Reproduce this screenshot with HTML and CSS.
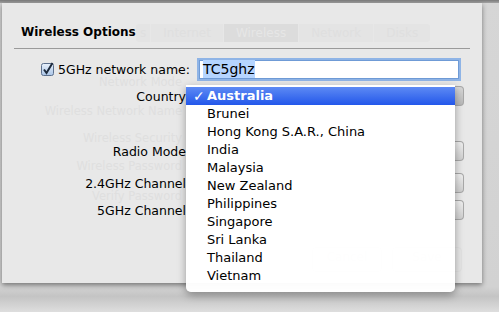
FILE: index.html
```html
<!DOCTYPE html>
<html lang="en">
<head>
  <meta charset="UTF-8">
  <title>Wireless Options</title>
  <link rel="stylesheet" href="styles.css">
</head>
<body>
  <div class="titlebar"></div>
  <div class="desk">
    <div class="sheet">
      <!-- faded window underneath the sheet -->
      <div class="ghost">
        <div class="ghost-tabs">
          <span class="gtab gtab-cut">s</span>
          <span class="gtab">Internet</span>
          <span class="gtab gtab-on">Wireless</span>
          <span class="gtab">Network</span>
          <span class="gtab">Disks</span>
        </div>
        <div class="glabel g1">Network Mode</div>
        <div class="glabel g2">Wireless Network Name</div>
        <div class="glabel g3">Wireless Security</div>
        <div class="glabel g4">Wireless Password</div>
        <div class="glabel g5">Verify Password</div>
        <div class="gbtn gb1">Cancel</div>
        <div class="gbtn gb2">Save</div>
      </div>

      <h2 class="title">Wireless Options</h2>
      <div class="rule"></div>

      <div class="form">
        <div class="row row-name">
          <label class="check-label">
            <svg class="check" width="13" height="14" viewBox="0 0 13 14">
              <defs>
                <linearGradient id="cb" x1="0" y1="0" x2="0" y2="1">
                  <stop offset="0" stop-color="#e9f1fb"/>
                  <stop offset="1" stop-color="#a9c4e6"/>
                </linearGradient>
              </defs>
              <rect x="0.5" y="1.5" width="12" height="12" rx="2" fill="url(#cb)" stroke="#5b6f8c"/>
              <path d="M3 7.5 L5.5 11 L11.5 1" fill="none" stroke="#1d2a3c" stroke-width="2"/>
            </svg>
            5GHz network name:
          </label>
          <div class="field"><span class="sel">TC5ghz</span></div>
        </div>
        <div class="row row-country"><span class="label">Country</span><span class="popup"></span></div>
        <div class="row row-radio"><span class="label">Radio Mode</span><span class="popup"></span></div>
        <div class="row row-24"><span class="label">2.4GHz Channel</span><span class="popup"></span></div>
        <div class="row row-5"><span class="label">5GHz Channel</span><span class="popup"></span></div>
      </div>

      <ul class="menu">
        <li class="item on"><span class="tick">✓</span>Australia</li>
        <li class="item">Brunei</li>
        <li class="item">Hong Kong S.A.R., China</li>
        <li class="item">India</li>
        <li class="item">Malaysia</li>
        <li class="item">New Zealand</li>
        <li class="item">Philippines</li>
        <li class="item">Singapore</li>
        <li class="item">Sri Lanka</li>
        <li class="item">Thailand</li>
        <li class="item">Vietnam</li>
      </ul>
    </div>
  </div>
</body>
</html>
```

FILE: styles.css
```css
body {
  margin: 0;
  width: 499px;
  height: 312px;
  overflow: hidden;
  font-family: "DejaVu Sans", sans-serif;
  font-size: 12px;
  color: #000;
  background: linear-gradient(#d6d6d6, #d2d2d2 92%, #c4c4c4 95%, #dedede);
}

.titlebar {
  height: 3px;
  background: linear-gradient(#7a7a7a, #a4a4a4);
}

.desk {
  padding-left: 2px;
}

.sheet {
  position: relative;
  width: 480px;
  height: 280px;
  background: #e8e8e8;
  box-shadow: 0 2px 5px rgba(0, 0, 0, 0.45);
}

/* ---------- faded window under the sheet ---------- */
.ghost {
  position: absolute;
  inset: 0;
  color: #dfdfdf;
  font-size: 12px;
  line-height: 13px;
}

.ghost-tabs {
  position: absolute;
  left: 134px;
  top: 21px;
  display: flex;
  height: 18px;
  background: #e4e4e4;
  border-radius: 3px;
}

.gtab {
  padding: 3px 12px 0;
  border-left: 1px solid #e7e7e7;
}

.gtab-cut {
  padding: 3px 4px 0;
  border-left: none;
}

.gtab-on {
  background: #dcdcdc;
  color: #e6e6e6;
}

.glabel {
  position: absolute;
  right: 300px;
  text-align: right;
  font-size: 11.5px;
  line-height: 11px;
}

.g1 { top: 74px; }
.g2 { top: 103px; }
.g3 { top: 130px; }
.g4 { top: 158px; }
.g5 { top: 188px; }

.gbtn {
  position: absolute;
  top: 244px;
  height: 20px;
  width: 68px;
  padding-top: 3px;
  text-align: center;
  border: 1px solid #e2e2e2;
  border-radius: 4px;
}

.gb1 { left: 310px; }
.gb2 { left: 390px; }

/* ---------- sheet content ---------- */
.title {
  margin: 0;
  padding: 22px 0 0 19px;
  height: 23px;
  font-size: 12px;
  font-weight: bold;
  position: relative;
}

.rule {
  margin: 0 12px;
  height: 1px;
  background: #9a9a9a;
  position: relative;
}

.form {
  position: relative;
  display: flex;
  flex-direction: column;
}

.row {
  display: flex;
  align-items: center;
  height: 20px;
}

.row-name { margin-top: 8px; height: 24px; }
.row-country { margin-top: 5px; }
.row-radio { margin-top: 35px; }
.row-24 { margin-top: 12px; }
.row-5 { margin-top: 7px; }

.check-label {
  display: flex;
  align-items: center;
  gap: 4px;
  margin-left: 39px;
  width: 156px;
  font-size: 12.5px;
}

.field {
  width: 260px;
  height: 19px;
  margin-left: 2px;
  background: #fff;
  border: 1px solid #6f9bd6;
  box-shadow: 0 0 0 2px #8fb4e6;
  font-size: 14px;
  line-height: 17px;
  padding-left: 3px;
  box-sizing: border-box;
}

.sel {
  background: #b5d5ff;
  padding: 1px 0;
}

.label {
  width: 184px;
  text-align: right;
  font-size: 12.5px;
  line-height: 13px;
}

.popup {
  margin-left: 269px;
  width: 8px;
  height: 18px;
  border: 1px solid #a8a8a8;
  border-left: none;
  border-radius: 0 4px 4px 0;
  background: linear-gradient(#f0f0f0, #cfcfcf);
}

.row-country .popup { background: linear-gradient(#d8d8d8, #b8b8b8); }

/* ---------- country menu ---------- */
.menu {
  position: absolute;
  left: 184px;
  top: 82px;
  width: 269px;
  margin: 0;
  padding: 2px 0 7px;
  list-style: none;
  background: rgba(255, 255, 255, 0.97);
  border-radius: 0 0 5px 5px;
  box-shadow: 0 3px 8px rgba(0, 0, 0, 0.35);
  font-size: 13px;
}

.item {
  height: 18px;
  line-height: 18px;
  padding-left: 21px;
  position: relative;
}

.item.on {
  color: #fff;
  font-weight: bold;
  background: linear-gradient(#5d8af4, #2357ea);
}

.tick {
  position: absolute;
  left: 7px;
  font-size: 14px;
}
```
